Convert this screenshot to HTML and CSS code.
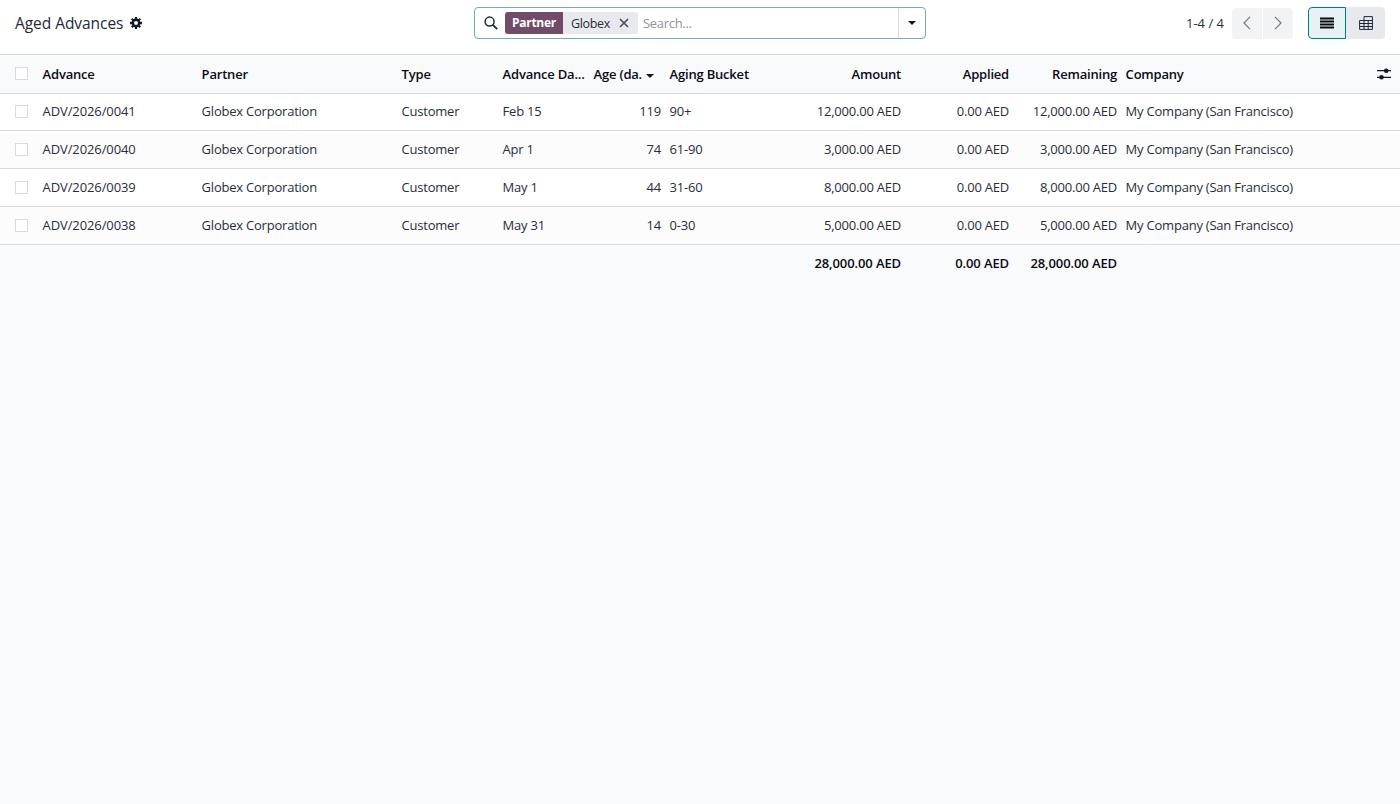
FILE: index.html
```html
<!DOCTYPE html>
<html lang="en">
<head>
    <meta charset="UTF-8">
    <meta name="viewport" content="width=device-width, initial-scale=1.0">
    <title>Aged Advances</title>
    <link rel="stylesheet" href="styles.css">
</head>
<body>

    <!-- Control panel -->
    <header class="control-panel">
        <div class="breadcrumb">
            <span class="title">Aged Advances</span>
            <svg class="gear" viewBox="0 0 12 12" width="12" height="12">
                <g fill="none" stroke="#111827">
                    <circle cx="6" cy="6" r="3.2" stroke-width="2.4"/>
                    <path stroke-width="2.3" d="M6 0v2.2M6 9.8V12M0 6h2.2M9.8 6H12M1.8 1.8l1.5 1.5M8.7 8.7l1.5 1.5M1.8 10.2l1.5-1.5M8.7 3.3l1.5-1.5"/>
                </g>
            </svg>
        </div>

        <div class="search">
            <svg class="search-icon" viewBox="0 0 14 14" width="14" height="14" fill="none" stroke="#1f2937">
                <circle cx="5.6" cy="5.6" r="4.5" stroke-width="1.5"/>
                <path d="M8.9 8.9l4.3 4.3" stroke-width="1.9"/>
            </svg>
            <div class="facet">
                <span class="facet-label">Partner</span>
                <span class="facet-value">Globex</span>
                <svg class="facet-remove" viewBox="0 0 10 10" width="10" height="10"><path d="M1 1l8 8M9 1L1 9" stroke="#4b5058" stroke-width="1.7"/></svg>
            </div>
            <span class="placeholder">Search...</span>
            <button class="search-toggle"><span class="caret"></span></button>
        </div>

        <div class="actions">
            <span class="pager">1-4 / 4</span>
            <div class="pager-buttons">
                <button class="btn pager-btn prev"><svg viewBox="0 0 8 14" width="8" height="14"><path d="M7 .8L1 7l6 6.2" fill="none" stroke="#777b80" stroke-width="1.2"/></svg></button>
                <button class="btn pager-btn next"><svg viewBox="0 0 8 14" width="8" height="14"><path d="M1 .8L7 7l-6 6.2" fill="none" stroke="#777b80" stroke-width="1.2"/></svg></button>
            </div>
            <div class="views">
                <button class="btn view active"><svg viewBox="0 0 14 12" width="14" height="12"><path d="M0 1.5h14M0 4.5h14M0 7.5h14M0 10.5h14" stroke="#080c10" stroke-width="1.8"/></svg></button>
                <button class="btn view pivot"><svg viewBox="0 0 14 14" width="14" height="14" fill="none" stroke="#1f2433"><path d="M5 .6h8.4v12.8H.6V4.5h12.8M.6 7.5h12.8M.6 10.5h12.8M5 .6v12.8M9.2 4v9.4"/></svg></button>
            </div>
        </div>
    </header>

    <!-- List view -->
    <table class="list">
        <colgroup>
            <col class="c-check"><col class="c-advance"><col class="c-partner"><col class="c-type">
            <col class="c-date"><col class="c-age"><col class="c-bucket"><col class="c-amount">
            <col class="c-applied"><col class="c-remaining"><col class="c-company"><col class="c-options">
        </colgroup>
        <thead>
            <tr>
                <th class="check"><span class="box"></span></th>
                <th>Advance</th>
                <th>Partner</th>
                <th>Type</th>
                <th>Advance Da...</th>
                <th class="sorted">Age (da.<span class="caret"></span></th>
                <th>Aging Bucket</th>
                <th class="num">Amount</th>
                <th class="num">Applied</th>
                <th class="num">Remaining</th>
                <th>Company</th>
                <th class="options"><svg viewBox="0 0 14 12" width="14" height="12"><path d="M0 2.7h14M0 9.3h14" stroke="#111827" stroke-width="1.2"/><circle cx="9.2" cy="2.7" r="2.3" fill="#111827"/><circle cx="4.5" cy="9.3" r="2.3" fill="#111827"/></svg></th>
            </tr>
        </thead>
        <tbody>
            <tr>
                <td class="check"><span class="box"></span></td>
                <td class="name">ADV/2026/0041</td>
                <td>Globex Corporation</td>
                <td>Customer</td>
                <td>Feb 15</td>
                <td class="num">119</td>
                <td>90+</td>
                <td class="num">12,000.00 AED</td>
                <td class="num">0.00 AED</td>
                <td class="num">12,000.00 AED</td>
                <td>My Company (San Francisco)</td>
                <td></td>
            </tr>
            <tr>
                <td class="check"><span class="box"></span></td>
                <td class="name">ADV/2026/0040</td>
                <td>Globex Corporation</td>
                <td>Customer</td>
                <td>Apr 1</td>
                <td class="num">74</td>
                <td>61-90</td>
                <td class="num">3,000.00 AED</td>
                <td class="num">0.00 AED</td>
                <td class="num">3,000.00 AED</td>
                <td>My Company (San Francisco)</td>
                <td></td>
            </tr>
            <tr>
                <td class="check"><span class="box"></span></td>
                <td class="name">ADV/2026/0039</td>
                <td>Globex Corporation</td>
                <td>Customer</td>
                <td>May 1</td>
                <td class="num">44</td>
                <td>31-60</td>
                <td class="num">8,000.00 AED</td>
                <td class="num">0.00 AED</td>
                <td class="num">8,000.00 AED</td>
                <td>My Company (San Francisco)</td>
                <td></td>
            </tr>
            <tr>
                <td class="check"><span class="box"></span></td>
                <td class="name">ADV/2026/0038</td>
                <td>Globex Corporation</td>
                <td>Customer</td>
                <td>May 31</td>
                <td class="num">14</td>
                <td>0-30</td>
                <td class="num">5,000.00 AED</td>
                <td class="num">0.00 AED</td>
                <td class="num">5,000.00 AED</td>
                <td>My Company (San Francisco)</td>
                <td></td>
            </tr>
        </tbody>
        <tfoot>
            <tr>
                <td colspan="7"></td>
                <td class="num">28,000.00 AED</td>
                <td class="num">0.00 AED</td>
                <td class="num">28,000.00 AED</td>
                <td colspan="2"></td>
            </tr>
        </tfoot>
    </table>

</body>
</html>
```
FILE: styles.css
```css
* {
    box-sizing: border-box;
}

body {
    margin: 0;
    background: #f9fafb;
    color: #272e3a;
    font-family: "Open Sans", "Noto Sans", sans-serif;
    font-size: 13px;
}

svg {
    display: block;
    flex: none;
}

button {
    border: none;
    padding: 0;
    font: inherit;
}

/* Control panel */
.control-panel {
    display: grid;
    grid-template-columns: 1fr 452px 1fr;
    align-items: center;
    height: 55px;
    padding: 0 15px 8px;
    background: #fff;
    border-bottom: 1px solid #d8dadd;
}

.breadcrumb {
    display: flex;
    align-items: center;
    gap: 7px;
}

.title {
    font-size: 15.5px;
    letter-spacing: -0.05px;
    color: #1f2937;
}

.search {
    display: flex;
    align-items: center;
    height: 32px;
    padding-left: 9px;
    border: 1px solid #71adb3;
    border-radius: 4px;
}

.facet {
    display: flex;
    align-items: center;
    height: 22px;
    margin-left: 7px;
    padding-right: 9px;
    background: #e7e9ed;
    border-radius: 3px;
    overflow: hidden;
    font-size: 12.5px;
    letter-spacing: -0.35px;
}

.facet-label {
    width: 58px;
    line-height: 22px;
    text-align: center;
    background: #714b67;
    color: #fff;
    font-size: 12px;
    font-weight: 700;
    letter-spacing: -0.3px;
}

.facet-value {
    width: 56px;
    padding-left: 8px;
}

.placeholder {
    flex: 1;
    padding-left: 5px;
    color: #8f949c;
    letter-spacing: -0.3px;
}

.search-toggle {
    display: flex;
    align-items: center;
    justify-content: center;
    width: 27px;
    height: 30px;
    background: none;
    border-left: 1px solid #d8dadd;
}

.caret {
    border: 4px solid transparent;
    border-top-color: #111827;
    border-bottom: none;
}

.actions {
    display: flex;
    align-items: center;
    justify-content: flex-end;
}

.pager {
    margin-right: 8px;
}

.pager-buttons,
.views {
    display: flex;
}

.pager-buttons {
    gap: 1px;
    margin-right: 15px;
}

.btn {
    display: flex;
    align-items: center;
    justify-content: center;
    height: 32px;
    background: #e7e9ed;
}

.pager-btn {
    width: 30px;
    height: 31px;
    background: #f2f3f5;
}

.prev {
    border-radius: 4px 0 0 4px;
}

.next {
    border-radius: 0 4px 4px 0;
}

.view {
    width: 38px;
}

.active {
    background: #e6f2f3;
    border: 1px solid #017e84;
    border-radius: 4px 0 0 4px;
}

.pivot {
    width: 39px;
    border-radius: 0 4px 4px 0;
}

/* List view */
.list {
    width: 1400px;
    table-layout: fixed;
    border-collapse: separate;
    border-spacing: 0;
}

.c-check { width: 38px; }
.c-advance { width: 159px; }
.c-partner { width: 200px; }
.c-type { width: 101px; }
.c-date { width: 91px; }
.c-age { width: 76px; }
.c-bucket { width: 135px; }
.c-amount { width: 105px; }
.c-applied { width: 108px; }
.c-remaining { width: 108px; }
.c-company { width: 245px; }
.c-options { width: 34px; }

.list th,
.list td {
    height: 38px;
    padding: 0 4px 2px 4.6px;
    border-bottom: 1px solid #d8dadd;
    text-align: left;
    white-space: nowrap;
    letter-spacing: -0.22px;
}

.list th {
    height: 39px;
    padding-bottom: 0;
    color: #080c14;
    font-weight: 600;
    letter-spacing: -0.2px;
}

.list tbody tr {
    background: #fff;
}

.list tbody tr:nth-child(even) {
    background: #fcfcfd;
}

.list tbody tr:first-child td {
    height: 37px;
}

.list .name {
    letter-spacing: -0.1px;
}

.list tfoot td {
    border-bottom: none;
    color: #080c14;
    font-weight: 600;
    letter-spacing: -0.1px;
}

.list .num {
    text-align: right;
}

.list .check {
    padding: 0 0 0 15px;
}

.list th.check,
.list tbody tr:first-child .check {
    padding-bottom: 1px;
}

.list .options {
    padding-left: 11px;
}

.sorted .caret {
    display: inline-block;
    margin-left: 4px;
    vertical-align: 1px;
}

.box {
    display: block;
    width: 13px;
    height: 13px;
    background: #fff;
    border: 1px solid #d8dadd;
}
```
